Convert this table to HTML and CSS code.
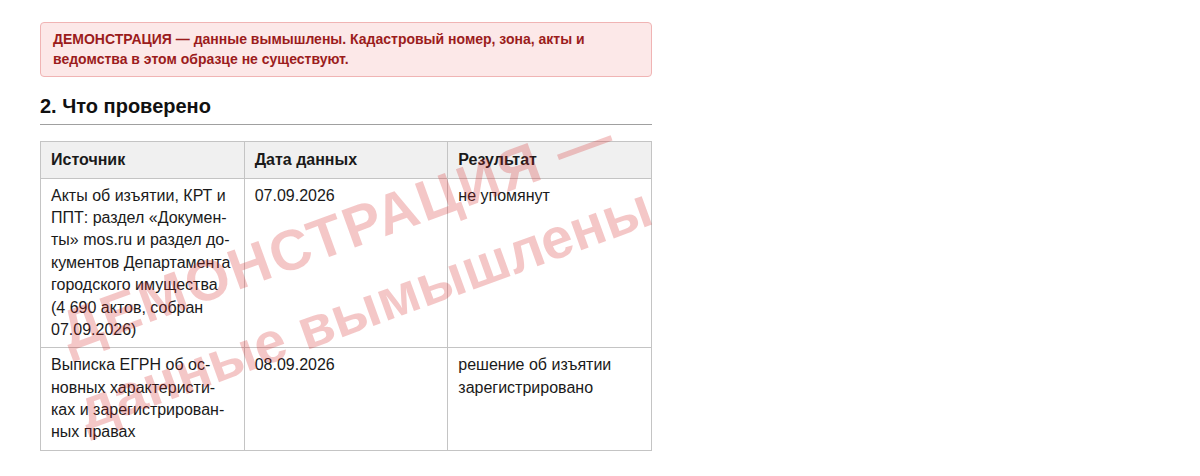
FILE: index.html
```html
<!DOCTYPE html>
<html lang="ru">
<head>
	<meta charset="UTF-8">
	<title>Что проверено</title>
	<link rel="stylesheet" href="styles.css">
</head>
<body>
	<div class="page">
		<div class="demo">ДЕМОНСТРАЦИЯ — данные вымышлены. Кадастровый номер, зона, акты и ведомства в этом образце не существуют.</div>

		<h2>2. Что проверено</h2>

		<table class="checks">
			<thead>
				<tr>
					<th>Источник</th>
					<th>Дата данных</th>
					<th>Результат</th>
				</tr>
			</thead>
			<tbody>
				<tr>
					<td>Акты об изъятии, КРТ и ППТ: раздел «Докумен&shy;ты» mos.ru и раздел до&shy;кументов Департамента городского имущества (4&nbsp;690 актов, собран 07.09.2026)</td>
					<td>07.09.2026</td>
					<td>не упомянут</td>
				</tr>
				<tr>
					<td>Выписка ЕГРН об ос&shy;новных характеристи&shy;ках и зарегистрирован&shy;ных правах</td>
					<td>08.09.2026</td>
					<td>решение об изъятии зарегистрировано</td>
				</tr>
			</tbody>
		</table>

		<!-- водяной знак поверх таблицы -->
		<div class="watermark"><span class="wm-top">ДЕМОНСТРАЦИЯ —</span><br>данные вымышлены</div>
	</div>
</body>
</html>
```

FILE: styles.css
```css
	*{
		padding: 0;
		margin: 0;
		box-sizing: border-box;
	}
	body{
		font-family: "Liberation Sans", Arial, sans-serif;
		color: #1a1a1a;
		background: #fff;
	}
	.page{
		width: 612px;
		margin-left: 40px;
		padding-top: 22px;
		position: relative;
	}
	.demo{
		background: #fce8e8;
		border: 1px solid #f0b4b4;
		border-radius: 4px;
		padding: 7px 12px;
		font-size: 14px;
		line-height: 1.4;
		font-weight: bold;
		color: #9b1c1c;
	}
	h2{
		margin-top: 15px;
		font-size: 20px;
		line-height: 28px;
		padding-bottom: 4px;
		border-bottom: 1px solid #a0a0a0;
		color: #111;
	}
	.checks{
		margin-top: 16px;
		width: 100%;
		border-collapse: collapse;
		table-layout: fixed;
		font-size: 16px;
		line-height: 1.4;
	}
	.checks th,
	.checks td{
		border: 1px solid #c4c4c4;
		padding: 6px 10px;
		text-align: left;
		vertical-align: top;
		hyphens: manual;
	}
	.checks th{
		background: #f0f0f0;
		padding: 7px 10px 6px;
		font-weight: bold;
	}
	.watermark{
		position: absolute;
		left: 311px;
		top: 271px;
		transform: translate(-50%, -50%) rotate(-20deg);
		white-space: nowrap;
		text-align: center;
		font-size: 57px;
		line-height: 1.4;
		font-weight: bold;
		color: rgba(210, 30, 30, 0.25);
		pointer-events: none;
	}
	.wm-top{
		letter-spacing: 2px;
	}
```
